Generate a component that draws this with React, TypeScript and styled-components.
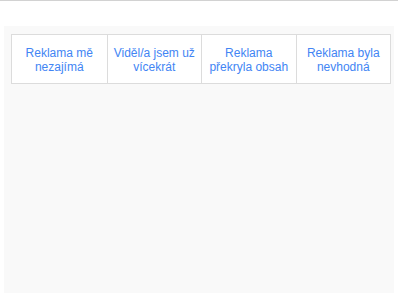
import styled, { createGlobalStyle } from "styled-components";

const reasons = [
  ["Reklama mě", "nezajímá"],
  ["Viděl/a jsem už", "vícekrát"],
  ["Reklama", "překryla obsah"],
  ["Reklama byla", "nevhodná"],
];

export default function App(): JSX.Element {
  return (
    <>
      <Global />
      <Page>
        <TopRule />
        <Panel>
          <Choices>
            {reasons.map((lines, i) => (
              <Choice key={i} $first={i === 0}>
                {lines[0]}
                <br />
                {lines[1]}
              </Choice>
            ))}
          </Choices>
        </Panel>
      </Page>
    </>
  );
}

const Global = createGlobalStyle`
  html, body {
    margin: 0;
    padding: 0;
    background: #fff;
  }
`;

const Page = styled.div`
  width: 398px;
  height: 293px;
  display: flex;
  flex-direction: column;
  font-family: "Liberation Sans", Arial, sans-serif;
`;

const TopRule = styled.div`
  height: 1px;
  background: #d2d2d2;
  margin-bottom: 25px;
`;

const Panel = styled.div`
  margin: 0 4px;
  height: 266px;
  background: #f9f9f9;
  padding: 8px 3px 0 7px;
`;

const Choices = styled.div`
  display: grid;
  grid-template-columns: repeat(4, 1fr);
  width: 380px;
  border: 1px solid #dcdcdc;
  background: #fff;
  box-sizing: border-box;
`;

const Choice = styled.div<{ $first: boolean }>`
  border-left: ${(p) => (p.$first ? "none" : "1px solid #dcdcdc")};
  height: 48px;
  padding-top: 2px;
  box-sizing: border-box;
  display: flex;
  align-items: center;
  justify-content: center;
  text-align: center;
  font-size: 12px;
  line-height: 14px;
  color: #4285f4;
`;
